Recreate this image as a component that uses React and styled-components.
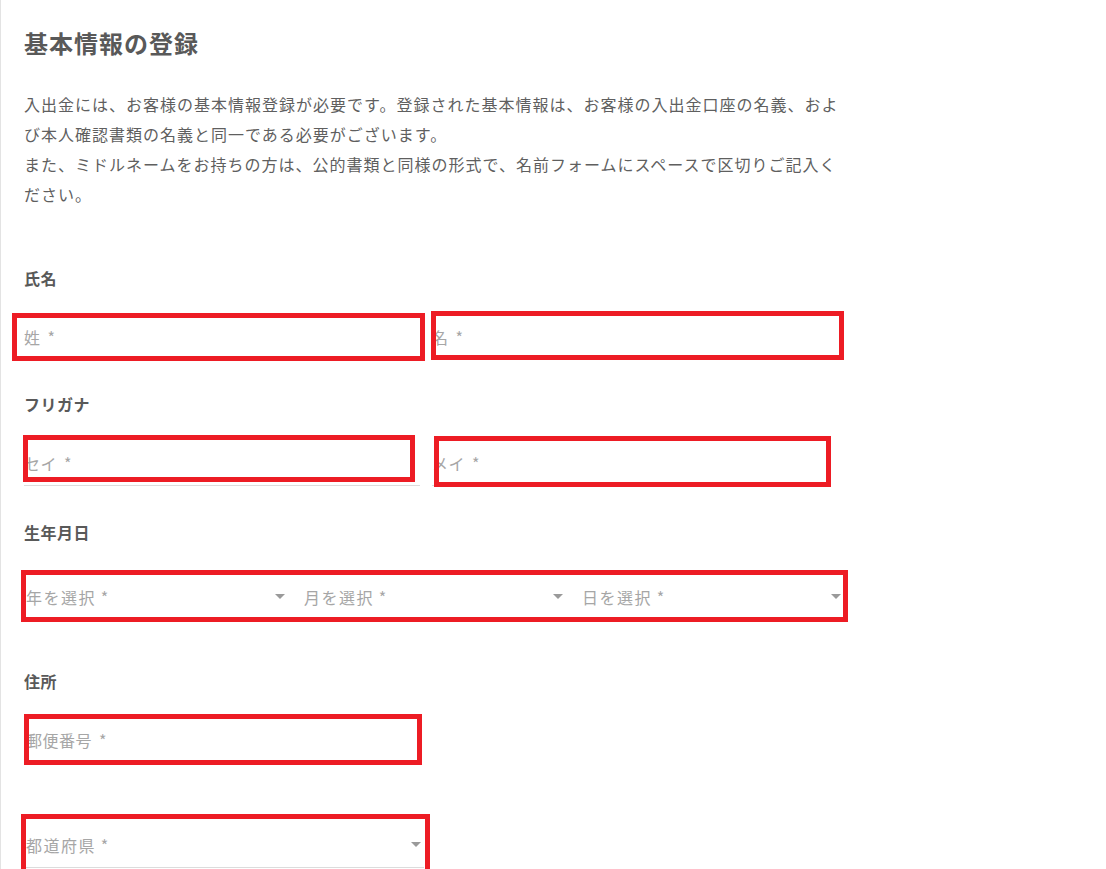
import React from 'react';
import styled, { createGlobalStyle } from 'styled-components';

const GlobalStyle = createGlobalStyle`
  html, body {
    margin: 0;
    padding: 0;
    background: #fff;
  }
  body {
    font-family: "Noto Sans CJK JP", "Noto Sans", sans-serif;
    color: #5c5c5c;
  }
`;

const Page = styled.div`
  min-height: 869px;
  border-left: 1px solid #e3e3e3;
  padding: 28px 0 0 23px;
  box-sizing: border-box;
`;

const Title = styled.h1`
  margin: 0;
  font-size: 24px;
  line-height: 30px;
  font-weight: 700;
  letter-spacing: 1px;
  color: #595959;
`;

const Intro = styled.p`
  margin: 31px 0 0;
  width: 822px;
  font-size: 16px;
  line-height: 30px;
  letter-spacing: 1px;
  color: #5f5f5f;
`;

const Section = styled.section`
  margin-top: ${p => p.$mt}px;
`;

const Label = styled.div`
  font-size: 16px;
  line-height: 20px;
  font-weight: 700;
  letter-spacing: 0.5px;
  color: #595959;
  margin-bottom: ${p => p.$gap}px;
`;

const Row = styled.div`
  display: flex;
  gap: 12px;
  margin-top: ${p => p.$mt || 0}px;
`;

const Field = styled.div`
  position: relative;
  width: ${p => p.$w}px;
`;

const TextInput = styled.input`
  display: block;
  width: 100%;
  height: 46px;
  box-sizing: border-box;
  border: none;
  border-bottom: 1px solid #dcdcdc;
  padding: 0 0 0 ${p => p.$pl || 0}px;
  font-family: inherit;
  font-size: 16px;
  letter-spacing: 0.5px;
  word-spacing: 3px;
  color: #555;
  outline: none;
  background: transparent;

  &::placeholder {
    color: #a6a6a6;
  }
`;

const SelectBox = styled.div`
  display: flex;
  align-items: center;
  justify-content: space-between;
  width: 100%;
  height: 46px;
  box-sizing: border-box;
  border-bottom: 1px solid #dcdcdc;
  padding: 0 ${p => p.$pr || 5}px 0 2px;
  font-size: 16px;
  letter-spacing: 1.5px;
  color: #a6a6a6;
`;

const Arrow = styled.span`
  width: 0;
  height: 0;
  border-left: 5px solid transparent;
  border-right: 5px solid transparent;
  border-top: 5px solid #9a9a9a;
`;

// hand-drawn red annotation boxes laid over the fields
const Mark = styled.span`
  position: absolute;
  top: ${p => p.$t}px;
  right: ${p => p.$r}px;
  bottom: ${p => p.$b}px;
  left: ${p => p.$l}px;
  border: 5px solid #ed1c24;
  pointer-events: none;
`;

const Select = ({ text, pr }) => (
  <SelectBox $pr={pr}>
    <span>{text}</span>
    <Arrow />
  </SelectBox>
);

export default function App() {
  return (
    <>
      <GlobalStyle />
      <Page>
        <Title>基本情報の登録</Title>
        <Intro>
          入出金には、お客様の基本情報登録が必要です。登録された基本情報は、お客様の入出金口座の名義、および本人確認書類の名義と同一である必要がございます。
          <br />
          また、ミドルネームをお持ちの方は、公的書類と同様の形式で、名前フォームにスペースで区切りご記入ください。
        </Intro>

        <Section $mt={59}>
          <Label $gap={26}>氏名</Label>
          <Row>
            <Field $w={396}>
              <TextInput placeholder="姓 *" />
              <Mark $t={-1} $r={-5} $b={-1} $l={-12} />
            </Field>
            <Field $w={396}>
              <TextInput placeholder="名 *" />
              <Mark $t={-3} $r={-16} $b={0} $l={-1} />
            </Field>
          </Row>
        </Section>

        <Section $mt={34}>
          <Label $gap={26}>フリガナ</Label>
          <Row>
            <Field $w={396}>
              <TextInput placeholder="セイ *" />
              <Mark $t={-5} $r={5} $b={4} $l={-1} />
            </Field>
            <Field $w={396}>
              <TextInput placeholder="メイ *" />
              <Mark $t={-4} $r={-3} $b={-1} $l={2} />
            </Field>
          </Row>
        </Section>

        <Section $mt={36}>
          <Label $gap={32}>生年月日</Label>
          <Field $w={822}>
            <Row>
              <Field $w={266}><Select text={'年を選択\u2009*'} /></Field>
              <Field $w={266}><Select text={'月を選択\u2009*'} /></Field>
              <Field $w={266}><Select text={'日を選択\u2009*'} /></Field>
            </Row>
            <Mark $t={-4} $r={-2} $b={-2} $l={-3} />
          </Field>
        </Section>

        <Section $mt={51}>
          <Label $gap={26}>住所</Label>
          <Row>
            <Field $w={396}>
              <TextInput placeholder="郵便番号 *" $pl={2} />
              <Mark $t={-3} $r={-2} $b={-2} $l={0} />
            </Field>
          </Row>
          <Row $mt={59}>
            <Field $w={400}>
              <Select text={'都道府県\u2009*'} pr={3} />
              <Mark $t={-8} $r={-6} $b={-6} $l={-3} />
            </Field>
          </Row>
        </Section>
      </Page>
    </>
  );
}
